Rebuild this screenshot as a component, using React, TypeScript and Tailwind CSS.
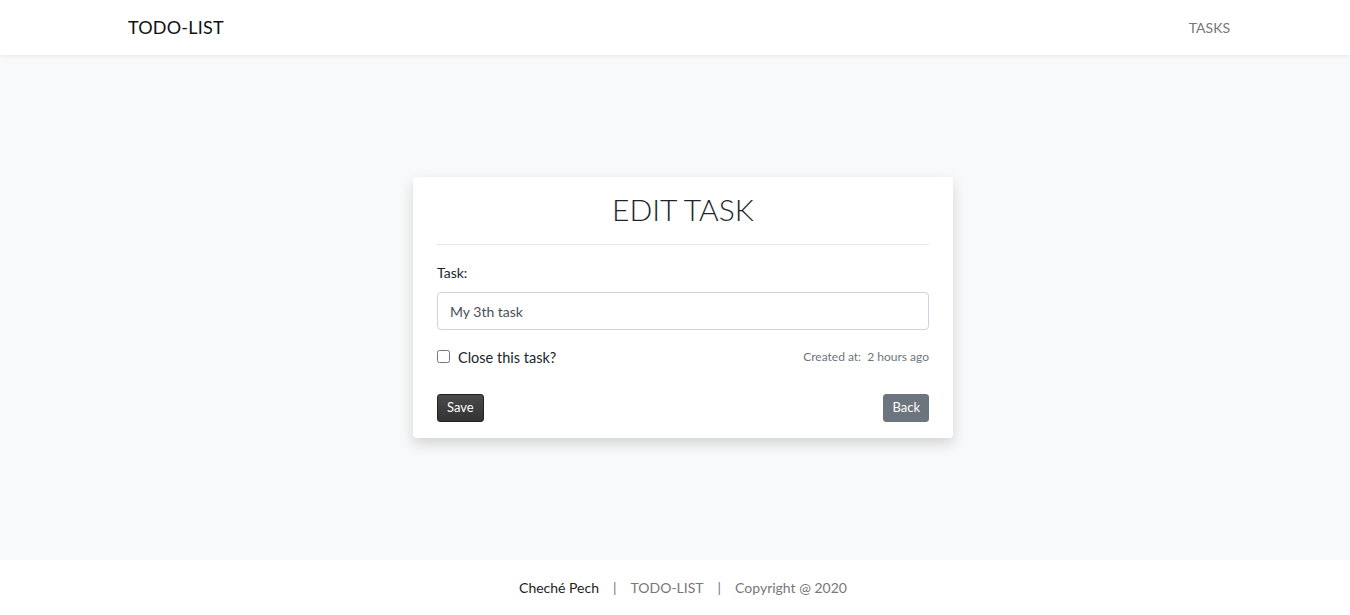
import React from "react";

export default function App() {
  const font = { fontFamily: "Lato, 'Open Sans', sans-serif" };
  return (
    <div className="flex h-[615px] flex-col bg-[#f8f9fa] text-[#212529]" style={font}>
      <nav className="relative z-10 flex h-[55px] shrink-0 items-center justify-between bg-white pl-[128px] pr-[120px] shadow-[0_1px_4px_rgba(0,0,0,0.08)]">
        <span className="text-[18px] tracking-[0.2px] text-[#111]">TODO-LIST</span>
        <span className="text-[14px] text-[#777]">TASKS</span>
      </nav>
      <main className="flex flex-1 items-center justify-center pl-4">
        <div className="w-[540px] rounded-[4px] bg-white px-6 pt-[14px] pb-4 shadow-[0_6px_14px_rgba(0,0,0,0.15)]">
          <h1 className="text-center text-[30px] leading-[36px] font-light text-[#212529]">EDIT TASK</h1>
          <hr className="mt-[17px] border-[#e6e6e6]" />
          <div className="mt-[18px] text-[14px] leading-[20px]">Task:</div>
          <input
            className="mt-[9px] h-[38px] w-full rounded-[4px] border border-[#ced4da] px-3 text-[14px] text-[#495057] outline-none"
            defaultValue="My 3th task"
            style={font}
          />
          <div className="mt-[14px] flex items-center justify-between">
            <label className="flex items-center gap-[8px] text-[14.5px]">
              <input type="checkbox" className="h-[13px] w-[13px]" />
              <span className="mt-[3px]">Close this task?</span>
            </label>
            <span className="text-[12px] text-[#6c757d]">Created at:&nbsp; 2 hours ago</span>
          </div>
          <div className="mt-[25px] flex items-center justify-between">
            <button className="h-[28px] rounded-[3px] border border-[#222] bg-gradient-to-b from-[#4a4a4a] to-[#333] px-[9px] text-[13px] text-white">Save</button>
            <button className="h-[28px] rounded-[3px] border border-[#6c757d] bg-[#6c757d] px-[8px] text-[13px] text-white">Back</button>
          </div>
        </div>
      </main>
      <footer className="flex h-[55px] shrink-0 items-center justify-center gap-[14px] bg-white pl-4 text-[14px] text-[#777]">
        <span className="text-[#222]">Cheché Pech</span>
        <span>|</span>
        <span>TODO-LIST</span>
        <span>|</span>
        <span>Copyright @ 2020</span>
      </footer>
    </div>
  );
}
